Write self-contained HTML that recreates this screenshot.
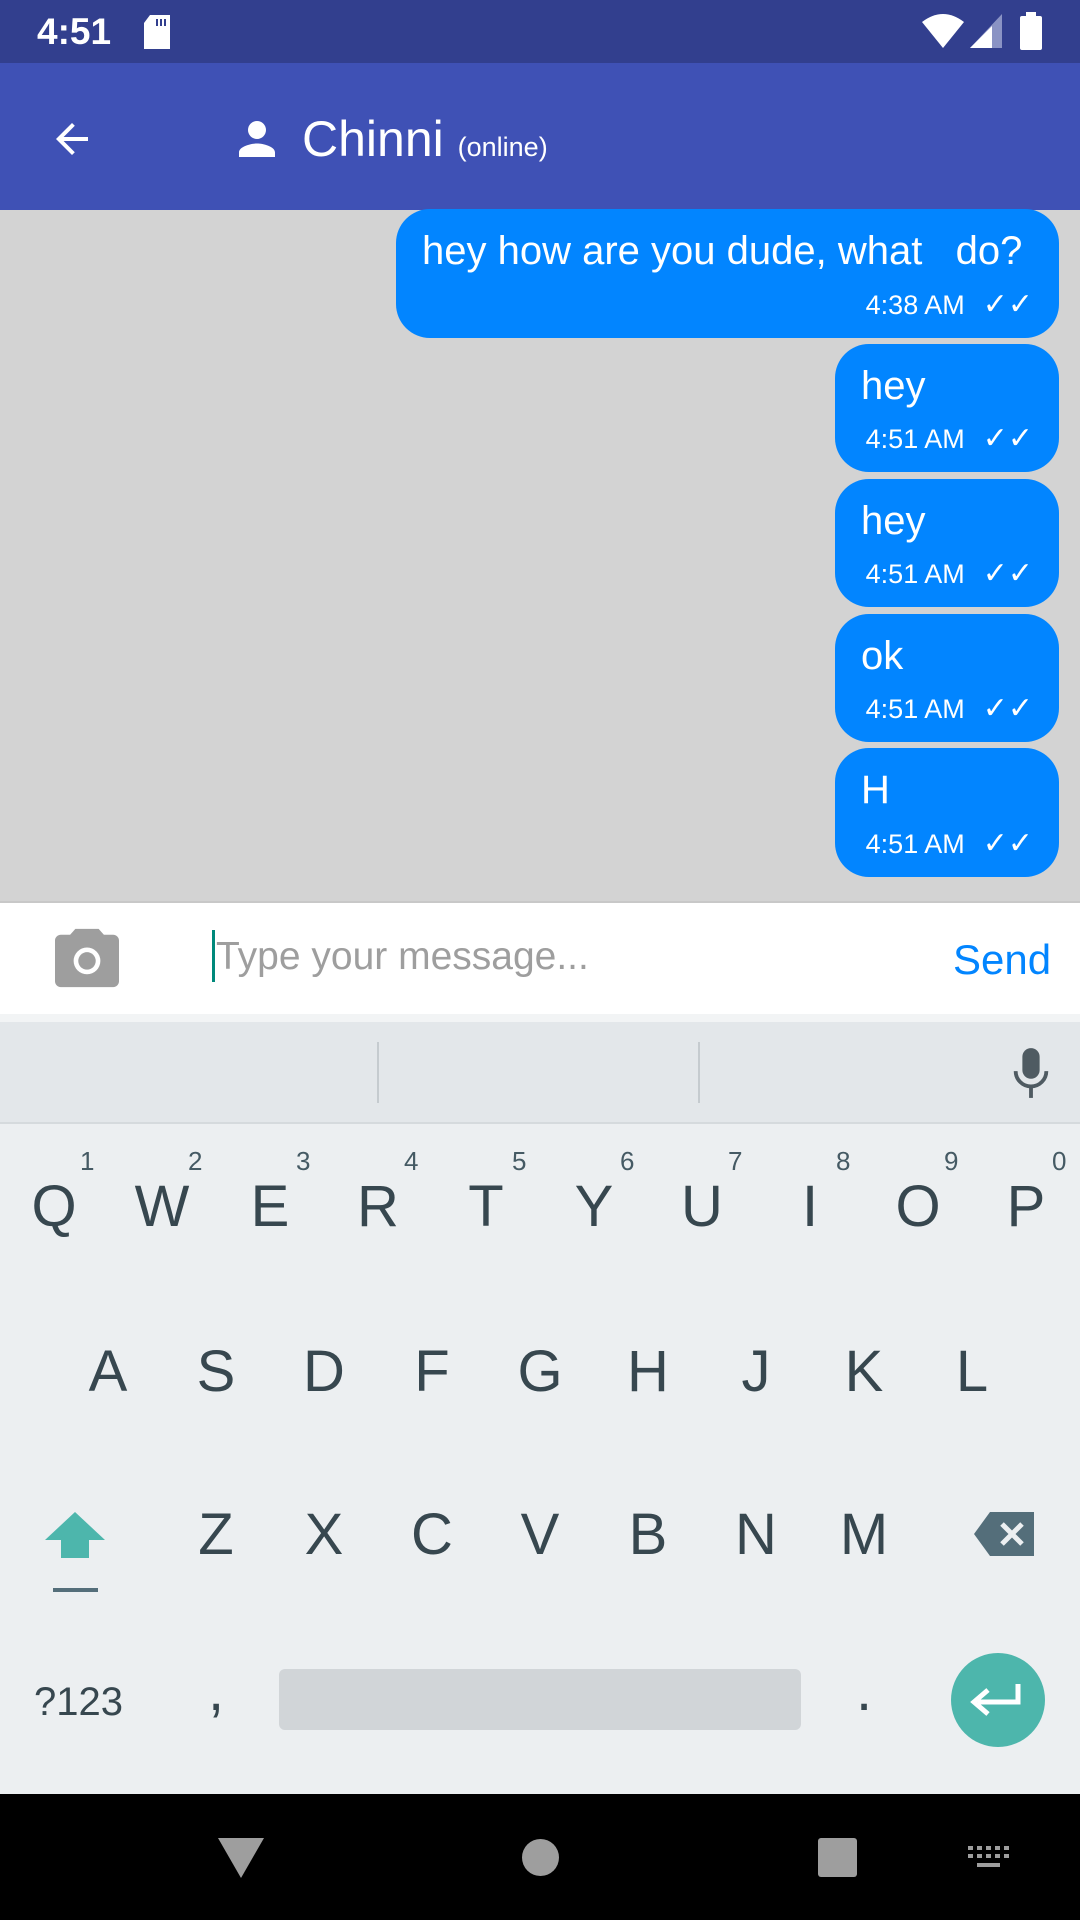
<!DOCTYPE html>
<html><head><meta charset="utf-8"><style>
*{margin:0;padding:0;box-sizing:border-box}
body{width:1080px;height:1920px;position:relative;overflow:hidden;font-family:"Liberation Sans",sans-serif;background:#d3d3d3}
.a{position:absolute}
.bub{position:absolute;background:#0285ff;border-radius:34px;color:#fff}
.bub .t{position:absolute;left:26px;top:20px;font-size:40px}
.bub .m{position:absolute;right:26px;bottom:16px;font-size:27px}
.bub .m span{font-size:30px;margin-left:18px}
.k{position:absolute;width:108px;text-align:center;font-size:58px;color:#37474f;line-height:1}
.n{position:absolute;font-size:26px;color:#455a64}
</style></head><body>
<div class="a" style="left:0;top:0;width:1080px;height:63px;background:#323f8e"></div>
<div class="a" style="left:37px;top:11px;font-size:37px;color:#fff;font-weight:bold">4:51</div>
<svg class="a" style="left:142px;top:15px" width="30" height="34"><path d="M8 0H28V34H2V8Z" fill="#fff"/><rect x="14" y="4" width="2" height="7" fill="#323f8e"/><rect x="18" y="4" width="2" height="7" fill="#323f8e"/><rect x="22" y="4" width="2" height="7" fill="#323f8e"/></svg>
<svg class="a" style="left:922px;top:14px" width="42" height="34"><path d="M0 8Q21-8 42 8L21 34Z" fill="#fff"/></svg>
<svg class="a" style="left:970px;top:14px" width="32" height="34"><path d="M32 0V34H0Z" fill="#8a93c4"/><path d="M22 10V34H0L22 12Z" fill="#fff"/></svg>
<svg class="a" style="left:1020px;top:12px" width="22" height="38"><rect x="6" y="0" width="10" height="5" fill="#fff"/><rect x="0" y="4" width="22" height="34" rx="2" fill="#fff"/></svg>
<div class="a" style="left:0;top:63px;width:1080px;height:147px;background:#3f51b5"></div>
<svg class="a" style="left:48px;top:115px" width="48" height="48" viewBox="0 0 24 24"><path d="M20 11H7.8l5.6-5.6L12 4l-8 8 8 8 1.4-1.4L7.8 13H20z" fill="#fff"/></svg>
<svg class="a" style="left:230px;top:112px" width="54" height="54" viewBox="0 0 24 24"><path d="M12 12c2.2 0 4-1.8 4-4s-1.8-4-4-4-4 1.8-4 4 1.8 4 4 4zm0 2c-2.7 0-8 1.3-8 4v2h16v-2c0-2.7-5.3-4-8-4z" fill="#fff"/></svg>
<div class="a" style="left:302px;top:110px;font-size:50px;color:#fff">Chinni <span style="font-size:27px">(online)</span></div>

<div class="bub" style="left:396px;top:209px;width:663px;height:129px"><div class="t">hey how are you dude, what &nbsp; do?</div><div class="m">4:38 AM<span>✓✓</span></div></div>
<div class="bub" style="left:835px;top:344px;width:224px;height:128px"><div class="t">hey</div><div class="m">4:51 AM<span>✓✓</span></div></div>
<div class="bub" style="left:835px;top:479px;width:224px;height:128px"><div class="t">hey</div><div class="m">4:51 AM<span>✓✓</span></div></div>
<div class="bub" style="left:835px;top:614px;width:224px;height:128px"><div class="t">ok</div><div class="m">4:51 AM<span>✓✓</span></div></div>
<div class="bub" style="left:835px;top:748px;width:224px;height:129px"><div class="t">H</div><div class="m">4:51 AM<span>✓✓</span></div></div>

<div class="a" style="left:0;top:901px;width:1080px;height:113px;background:#fff;border-top:2px solid #c8c8c8"></div>
<svg class="a" style="left:52px;top:926px" width="70" height="64" viewBox="0 0 24 22"><path d="M8 1L6.2 3H3C1.9 3 1 3.9 1 5v14c0 1.1.9 2 2 2h18c1.1 0 2-.9 2-2V5c0-1.1-.9-2-2-2h-3.2L16 1z" fill="#9e9e9e"/><circle cx="12" cy="12" r="4.6" fill="#fff"/><circle cx="12" cy="12" r="3" fill="#9e9e9e"/></svg>
<div class="a" style="left:212px;top:930px;width:3px;height:52px;background:#00897b"></div>
<div class="a" style="left:216px;top:935px;font-size:39px;color:#9e9e9e">Type your message...</div>
<div class="a" style="left:953px;top:936px;font-size:42px;color:#0285ff">Send</div>

<div class="a" style="left:0;top:1014px;width:1080px;height:780px;background:#eceff1"></div>
<div class="a" style="left:0;top:1014px;width:1080px;height:8px;background:#f2f4f5"></div>
<div class="a" style="left:0;top:1022px;width:1080px;height:102px;background:#e3e7ea;border-bottom:2px solid #d5dadd"></div>
<div class="a" style="left:377px;top:1042px;width:2px;height:61px;background:#c5cbcf"></div>
<div class="a" style="left:698px;top:1042px;width:2px;height:61px;background:#c5cbcf"></div>
<svg class="a" style="left:1008px;top:1046px" width="46" height="54" viewBox="0 0 24 28"><rect x="7.5" y="1" width="9" height="16" rx="4.5" fill="#4f5b62"/><path d="M4 13a8 8 0 0016 0" stroke="#4f5b62" stroke-width="2" fill="none"/><rect x="11" y="21" width="2" height="6" fill="#4f5b62"/></svg>

<div class="k" style="left:0;top:1178px">Q</div><div class="n" style="left:80px;top:1146px">1</div>
<div class="k" style="left:108px;top:1178px">W</div><div class="n" style="left:188px;top:1146px">2</div>
<div class="k" style="left:216px;top:1178px">E</div><div class="n" style="left:296px;top:1146px">3</div>
<div class="k" style="left:324px;top:1178px">R</div><div class="n" style="left:404px;top:1146px">4</div>
<div class="k" style="left:432px;top:1178px">T</div><div class="n" style="left:512px;top:1146px">5</div>
<div class="k" style="left:540px;top:1178px">Y</div><div class="n" style="left:620px;top:1146px">6</div>
<div class="k" style="left:648px;top:1178px">U</div><div class="n" style="left:728px;top:1146px">7</div>
<div class="k" style="left:756px;top:1178px">I</div><div class="n" style="left:836px;top:1146px">8</div>
<div class="k" style="left:864px;top:1178px">O</div><div class="n" style="left:944px;top:1146px">9</div>
<div class="k" style="left:972px;top:1178px">P</div><div class="n" style="left:1052px;top:1146px">0</div>

<div class="k" style="left:54px;top:1343px">A</div>
<div class="k" style="left:162px;top:1343px">S</div>
<div class="k" style="left:270px;top:1343px">D</div>
<div class="k" style="left:378px;top:1343px">F</div>
<div class="k" style="left:486px;top:1343px">G</div>
<div class="k" style="left:594px;top:1343px">H</div>
<div class="k" style="left:702px;top:1343px">J</div>
<div class="k" style="left:810px;top:1343px">K</div>
<div class="k" style="left:918px;top:1343px">L</div>

<svg class="a" style="left:43px;top:1510px" width="64" height="50"><path d="M32 2L62 30H46V48H18V30H2Z" fill="#4db6ac"/></svg>
<div class="a" style="left:53px;top:1588px;width:45px;height:4px;background:#546e7a"></div>
<div class="k" style="left:162px;top:1506px">Z</div>
<div class="k" style="left:270px;top:1506px">X</div>
<div class="k" style="left:378px;top:1506px">C</div>
<div class="k" style="left:486px;top:1506px">V</div>
<div class="k" style="left:594px;top:1506px">B</div>
<div class="k" style="left:702px;top:1506px">N</div>
<div class="k" style="left:810px;top:1506px">M</div>
<svg class="a" style="left:972px;top:1510px" width="64" height="48"><path d="M18 2H62V46H18L2 24Z" fill="#546e7a"/><path d="M30 14L50 34M50 14L30 34" stroke="#eceff1" stroke-width="5"/></svg>

<div class="a" style="left:34px;top:1680px;font-size:40px;color:#37474f">?123</div>
<div class="k" style="left:162px;top:1662px">,</div>
<div class="a" style="left:279px;top:1669px;width:522px;height:61px;background:#d1d5d8;border-radius:6px"></div>
<div class="k" style="left:810px;top:1662px">.</div>
<div class="a" style="left:951px;top:1653px;width:94px;height:94px;border-radius:50%;background:#4db6ac"></div>
<svg class="a" style="left:968px;top:1680px" width="60" height="40"><path d="M50 4V22H10" stroke="#fff" stroke-width="5" fill="none"/><path d="M20 10L6 22L20 34" stroke="#fff" stroke-width="5" fill="none"/></svg>

<div class="a" style="left:0;top:1794px;width:1080px;height:126px;background:#000"></div>
<svg class="a" style="left:218px;top:1838px" width="46" height="40"><path d="M0 0H46L23 40Z" fill="#9e9e9e"/></svg>
<div class="a" style="left:522px;top:1839px;width:37px;height:37px;border-radius:50%;background:#9e9e9e"></div>
<div class="a" style="left:818px;top:1838px;width:39px;height:39px;border-radius:3px;background:#9e9e9e"></div>
<svg class="a" style="left:968px;top:1846px" width="42" height="24" fill="#9e9e9e"><rect x="0" y="0" width="5" height="4"/><rect x="9" y="0" width="5" height="4"/><rect x="18" y="0" width="5" height="4"/><rect x="27" y="0" width="5" height="4"/><rect x="36" y="0" width="5" height="4"/><rect x="0" y="8" width="5" height="4"/><rect x="9" y="8" width="5" height="4"/><rect x="18" y="8" width="5" height="4"/><rect x="27" y="8" width="5" height="4"/><rect x="36" y="8" width="5" height="4"/><rect x="9" y="17" width="23" height="4"/></svg>
</body></html>
